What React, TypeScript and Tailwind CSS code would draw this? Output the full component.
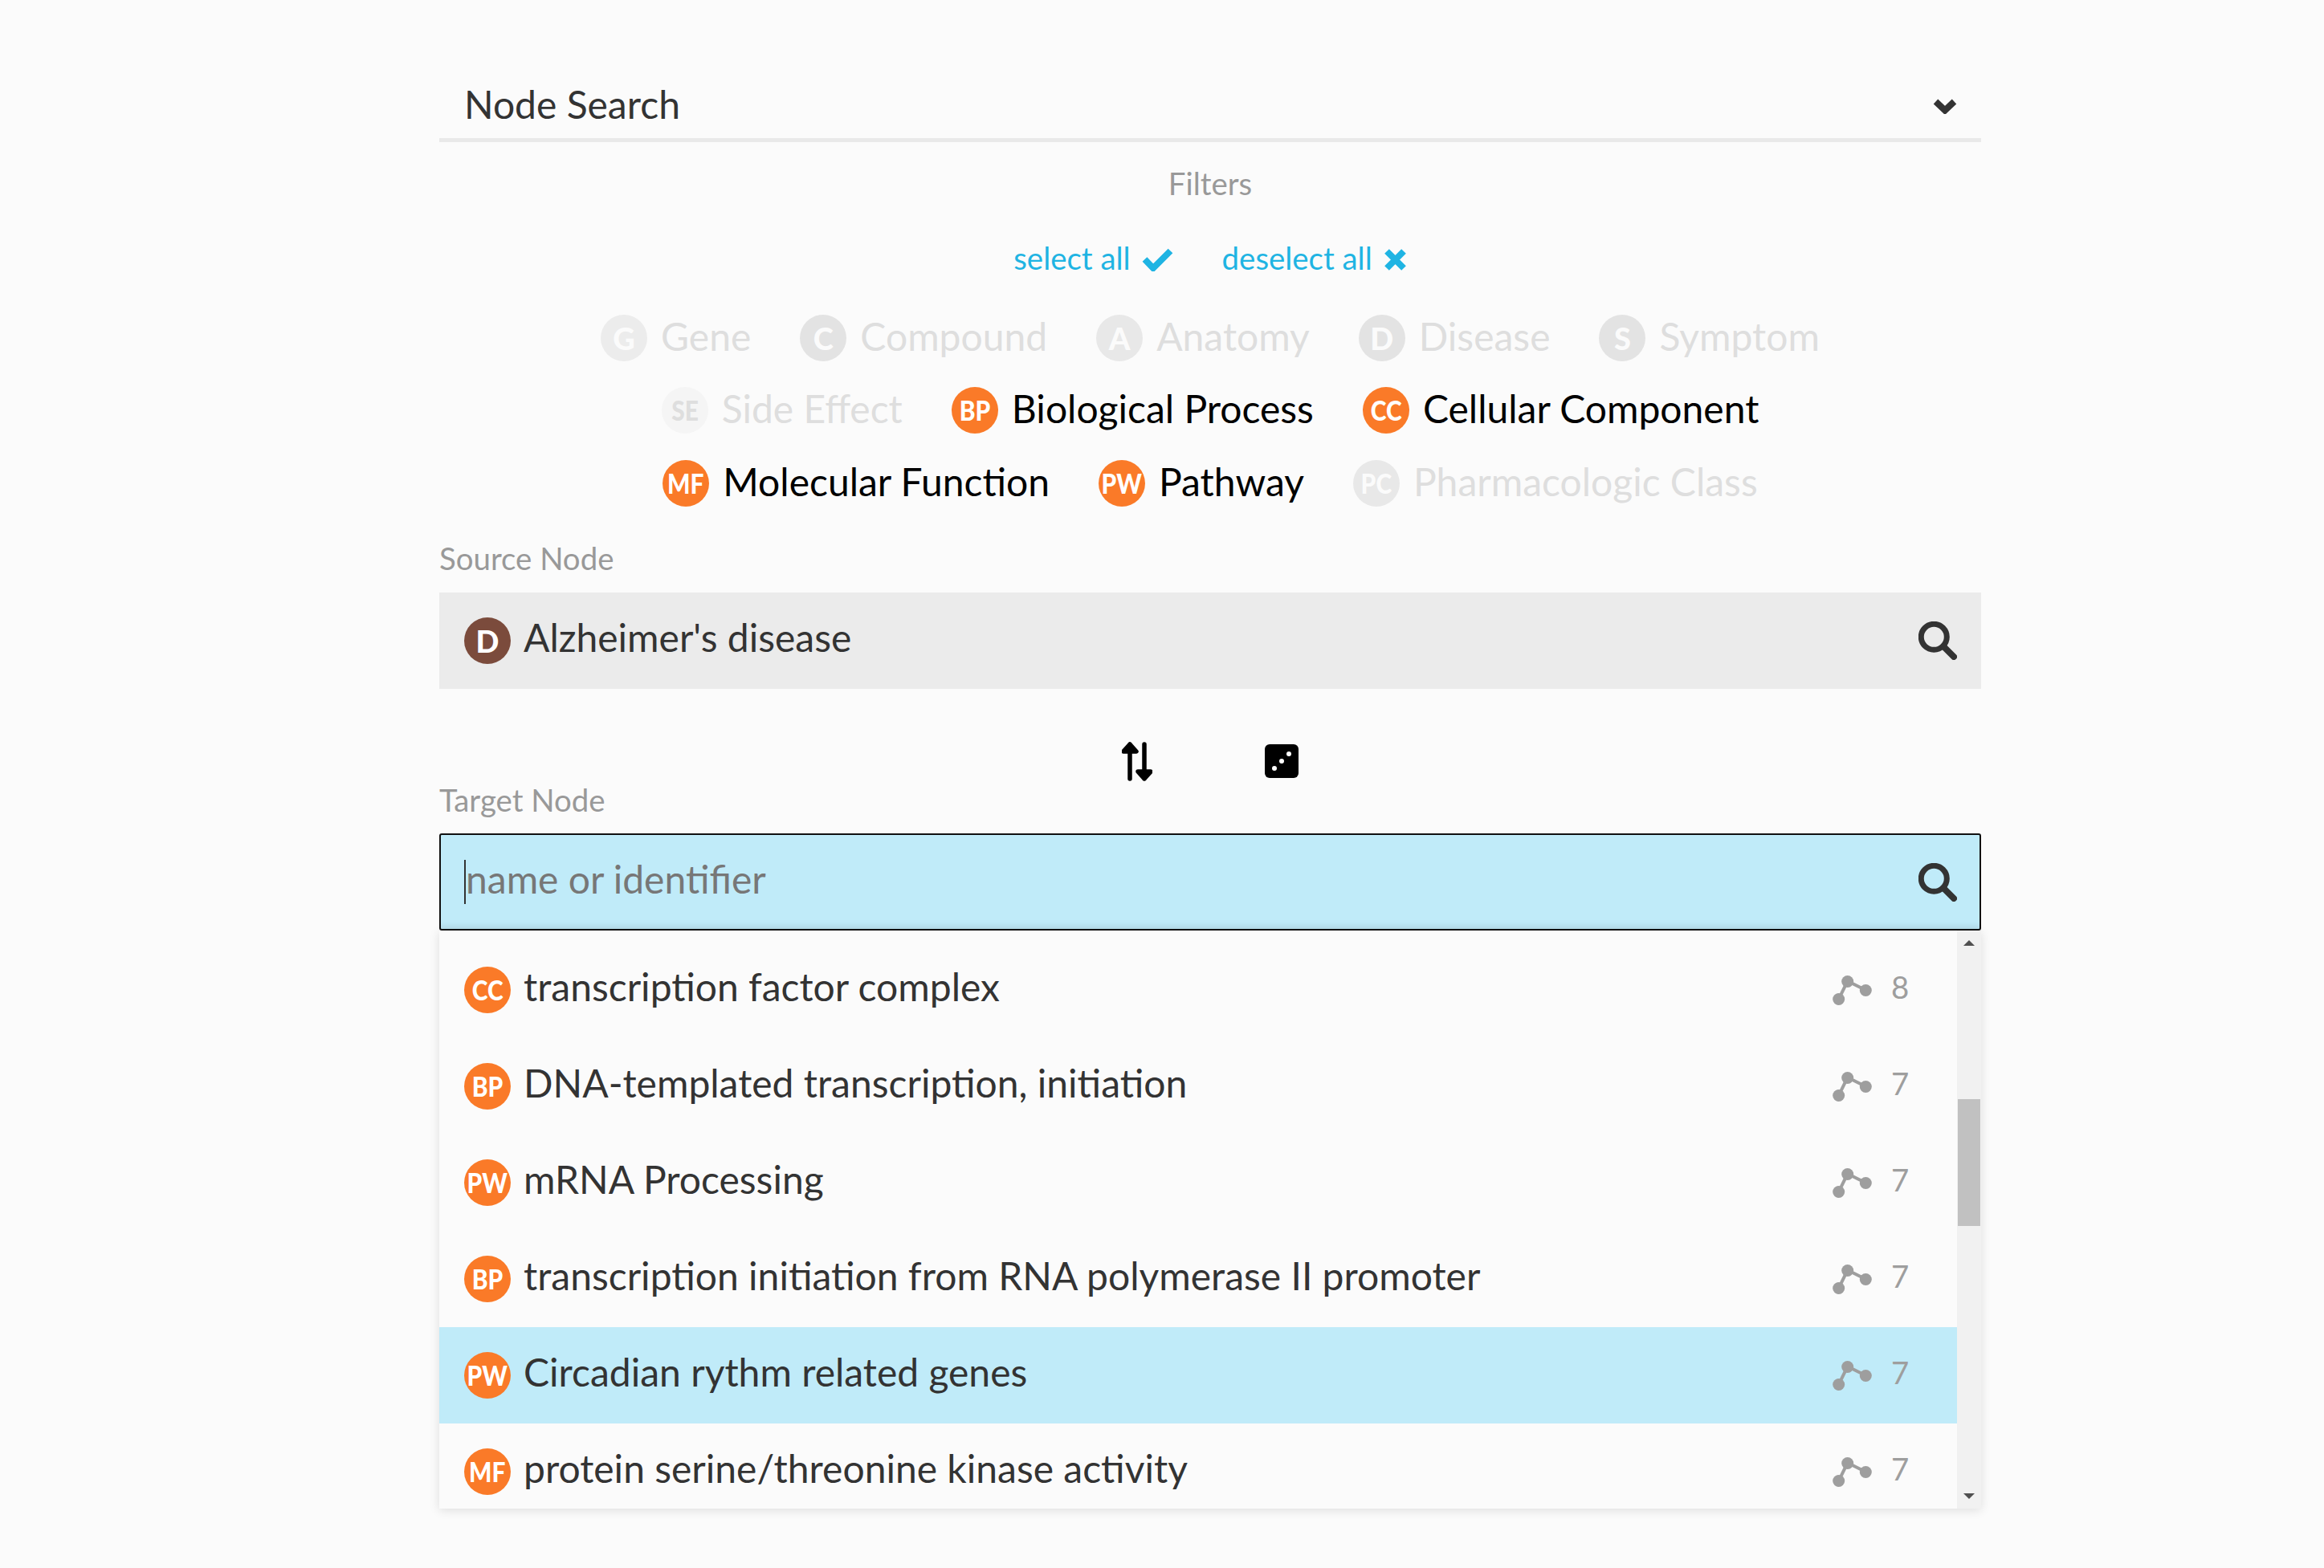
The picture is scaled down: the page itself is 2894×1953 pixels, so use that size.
// NodeSearch — panel de búsqueda de nodos con filtros y resultados.
const FONT = "font-['Lato','Noto_Sans',sans-serif]";

function Badge({ code, color = 'bg-[#fa7a28]', text = 'text-white' }: { code: string; color?: string; text?: string }) {
  const single = code.length === 1;
  return (
    <span className={`grid h-[58px] w-[58px] shrink-0 place-items-center rounded-full font-black leading-none ${color} ${text}`}>
      <span className={single ? 'text-[38px]' : 'scale-x-[0.88] text-[34px]'}>{code}</span>
    </span>
  );
}

function FilterItem({ code, label, on, circle, letter = 'text-[#fbfbfb]' }: { code: string; label: string; on?: boolean; circle?: string; letter?: string }) {
  return (
    <div className={`flex h-[58px] items-center gap-[17px] text-[48px] leading-none ${on ? 'text-black' : 'text-[#dedede]'}`}>
      {on ? <Badge code={code} /> : <Badge code={code} color={circle} text={letter} />}
      <span className="pb-[4px]">{label}</span>
    </div>
  );
}

function SearchIcon() {
  return (
    <svg width="48" height="48" viewBox="0 0 48 48" className="shrink-0">
      <circle cx="19.3" cy="19.3" r="16" fill="none" stroke="#333" strokeWidth="7" />
      <path d="M31 31 L44 44" stroke="#333" strokeWidth="8" strokeLinecap="round" />
    </svg>
  );
}

function GraphIcon() {
  return (
    <svg width="49" height="37" viewBox="0 0 49 37" className="shrink-0">
      <path d="M7.7 29.3 L18.7 7 L41.3 18.3" fill="none" stroke="#9e9e9e" strokeWidth="4" />
      <circle cx="18.7" cy="7.5" r="7.5" fill="#9e9e9e" />
      <circle cx="41.3" cy="18.5" r="7.5" fill="#9e9e9e" />
      <circle cx="7.7" cy="29.5" r="7.5" fill="#9e9e9e" />
    </svg>
  );
}

const results = [
  { code: 'CC', name: 'transcription factor complex', n: 8 },
  { code: 'BP', name: 'DNA-templated transcription, initiation', n: 7 },
  { code: 'PW', name: 'mRNA Processing', n: 7 },
  { code: 'BP', name: 'transcription initiation from RNA polymerase II promoter', n: 7 },
  { code: 'PW', name: 'Circadian rythm related genes', n: 7, active: true },
  { code: 'MF', name: 'protein serine/threonine kinase activity', n: 7 },
];

export default function App() {
  return (
    <div className={`h-[1953px] w-full overflow-hidden bg-[#fbfbfb] ${FONT}`}>
      <div className="ml-[547px] w-[1920px]">
        {/* Cabecera */}
        <div className="flex h-[177px] items-end border-b-[5px] border-[#e9e9e9] pb-[17px] pl-[31px] pr-[30px]">
          <div className="flex h-[50px] w-full items-center justify-between text-[48px] leading-none text-[#333]">
            <span>Node Search</span>
            <svg width="30" height="20" viewBox="0 0 30 20" className="mt-[4px]">
              <path d="M3.5 4.5 L15 15.5 L26.5 4.5" fill="none" stroke="#333" strokeWidth="8" />
            </svg>
          </div>
        </div>

        {/* Filtros */}
        <div className="mt-[38px] h-[30px] text-center text-[38.4px] leading-[26px] text-[#999]">Filters</div>
        <div className="mt-[63px] flex h-[30px] justify-center gap-[61px] text-[38.4px] leading-[26px] text-[#1fb4e3]">
          <div className="flex items-center gap-[14px]">
            <span className="pb-[4px]">select all</span>
            <svg width="39" height="29" viewBox="0 0 39 29">
              <path d="M3.5 14 L14 25 L35.5 3.5" fill="none" stroke="#1fb4e3" strokeWidth="8" />
            </svg>
          </div>
          <div className="flex items-center gap-[14px]">
            <span className="pb-[4px]">deselect all</span>
            <svg width="29" height="29" viewBox="0 0 29 29">
              <path d="M4 4 L25 25 M25 4 L4 25" fill="none" stroke="#1fb4e3" strokeWidth="8" />
            </svg>
          </div>
        </div>

        <div className="mt-[54px] flex justify-center gap-[61px]">
          <FilterItem code="G" label="Gene" circle="bg-[#ececec]" />
          <FilterItem code="C" label="Compound" circle="bg-[#e3e3e3]" />
          <FilterItem code="A" label="Anatomy" circle="bg-[#e8e8e8]" />
          <FilterItem code="D" label="Disease" circle="bg-[#e3e3e3]" />
          <FilterItem code="S" label="Symptom" circle="bg-[#e3e3e3]" />
        </div>
        <div className="mt-[32px] flex justify-center gap-[61px]">
          <FilterItem code="SE" label="Side Effect" circle="bg-[#f5f5f5]" letter="text-[#dedede]" />
          <FilterItem code="BP" label="Biological Process" on />
          <FilterItem code="CC" label="Cellular Component" on />
        </div>
        <div className="mt-[33px] flex justify-center gap-[61px]">
          <FilterItem code="MF" label="Molecular Function" on />
          <FilterItem code="PW" label="Pathway" on />
          <FilterItem code="PC" label="Pharmacologic Class" circle="bg-[#e8e8e8]" />
        </div>

        {/* Nodo origen */}
        <div className="mt-[50px] h-[30px] text-[38.4px] leading-[28px] text-[#999]">Source Node</div>
        <div className="mt-[27px] flex h-[120px] items-center gap-[16px] bg-[#ebebeb] pl-[31px] pr-[30px] text-[48px] leading-none text-[#333]">
          <Badge code="D" color="bg-[#7b4b3c]" />
          <span className="flex-1 pb-[8px]">Alzheimer's disease</span>
          <SearchIcon />
        </div>

        <div className="mt-[65px] flex h-[50px] items-center justify-center gap-[140px]">
          <svg width="38" height="49" viewBox="0 0 38 49">
            <path d="M10 46 V3 M2 12 L10 3 L18 12 Z M28 3 V46 M20 37 L28 46 L36 37 Z" fill="#000" stroke="#000" strokeWidth="5.5" strokeLinecap="round" strokeLinejoin="round" />
          </svg>
          <svg width="42" height="42" viewBox="0 0 42 42">
            <rect width="42" height="42" rx="6" fill="#000" />
            <circle cx="12" cy="30" r="3" fill="#fff" />
            <circle cx="21" cy="21" r="3" fill="#fff" />
            <circle cx="30" cy="12" r="3" fill="#fff" />
          </svg>
        </div>

        {/* Nodo destino */}
        <div className="mt-[10px] h-[30px] text-[38.4px] leading-[26px] text-[#999]">Target Node</div>
        <div className="mt-[25px] flex h-[121px] items-center rounded-[3px] border-[2px] border-[#111] bg-[#c0ebf9] pl-[29px] pr-[28px] text-[48px] leading-none text-[#777] shadow-[inset_0_-14px_12px_-12px_rgba(0,0,0,0.08)]">
          <span className="flex-1 border-l-[2px] border-[#333] pb-[7px]">name or identifier</span>
          <SearchIcon />
        </div>

        {/* Resultados */}
        <div className="flex h-[720px] overflow-hidden bg-[#fbfbfb] shadow-[0_2px_12px_rgba(0,0,0,0.12)]">
          <div className="flex-1 pt-[14px]">
            {results.map((r) => (
              <div
                key={r.name}
                className={`flex h-[120px] items-center pl-[31px] pr-[61px] ${r.active ? 'bg-[#c0ebf9]' : ''}`}
              >
                <Badge code={r.code} />
                <span className="ml-[16px] flex-1 pb-[9px] text-[48px] leading-none text-[#333]">{r.name}</span>
                <GraphIcon />
                <span className="ml-[24px] w-[21px] pb-[8px] text-[38.4px] leading-none text-[#9e9e9e]">{r.n}</span>
              </div>
            ))}
          </div>
          <div className="flex w-[30px] flex-col bg-[#f1f1f1]">
            <div className="mx-auto mt-[12px] h-0 w-0 border-x-[7px] border-b-[7px] border-x-transparent border-b-[#505050]" />
            <div className="mx-[1px] mt-[191px] h-[158px] bg-[#c1c1c1]" />
            <div className="mx-auto mt-auto mb-[12px] h-0 w-0 border-x-[7px] border-t-[7px] border-x-transparent border-t-[#505050]" />
          </div>
        </div>
      </div>
    </div>
  );
}
